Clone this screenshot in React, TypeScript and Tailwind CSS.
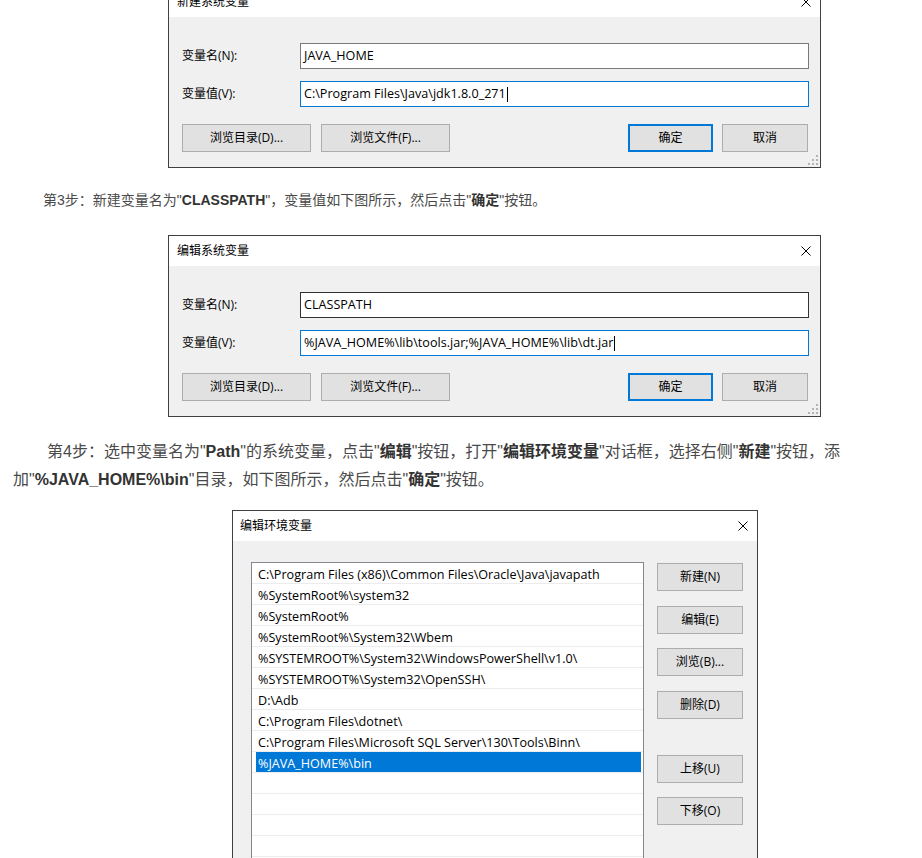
import React from 'react';

const ui = "font-['Open_Sans','Noto_Sans_CJK_SC',sans-serif]";
const article = "font-['Liberation_Sans','Noto_Sans_CJK_SC',sans-serif]";

function CloseIcon() {
  return (
    <svg width="10" height="10" viewBox="0 0 10 10" className="shrink-0">
      <path d="M0.5 0.5L9.5 9.5M9.5 0.5L0.5 9.5" stroke="#000" strokeWidth="1" fill="none" />
    </svg>
  );
}

function Grip() {
  return (
    <svg width="10" height="10" viewBox="0 0 10 10" className="absolute right-[2px] bottom-[2px]">
      {[
        [8, 0],
        [4, 4],
        [8, 4],
        [0, 8],
        [4, 8],
        [8, 8],
      ].map(([x, y]) => (
        <rect key={`${x}-${y}`} x={x} y={y} width="2" height="2" fill="#b4b4b4" />
      ))}
    </svg>
  );
}

function WinButton({ label, className = '', primary = false }: { label: string; className?: string; primary?: boolean }) {
  return (
    <div
      className={`h-[28px] flex items-center justify-center bg-[#e1e1e1] text-[12px] text-black ${
        primary ? 'border-2 border-[#0078d7]' : 'border border-[#adadad]'
      } ${className}`}
    >
      {label}
    </div>
  );
}

interface VarDialogProps {
  title: string;
  name: string;
  value: string;
  nameBorder: string;
}

function VarDialog({ title, name, value, nameBorder }: VarDialogProps) {
  return (
    <div className={`relative w-[653px] border border-[#404040] bg-[#f0f0f0] ${ui}`}>
      <div className="h-[30px] bg-white flex items-center justify-between pl-[8px] pr-[9px]">
        <span className="text-[12px] text-black">{title}</span>
        <CloseIcon />
      </div>
      <div className="pt-[26px] pb-[15px] pl-[13px] pr-[11px]">
        <div className="flex items-center">
          <span className="w-[118px] text-[12px] text-black">变量名(N):</span>
          <div className={`flex-1 h-[26px] bg-white border ${nameBorder} flex items-center px-[3px] text-[12.6px] text-black`}>
            {name}
          </div>
        </div>
        <div className="mt-[12px] flex items-center">
          <span className="w-[118px] text-[12px] text-black">变量值(V):</span>
          <div className="flex-1 h-[26px] bg-white border border-[#0078d7] flex items-center px-[3px] text-[12.6px] text-black">
            <span>{value}</span>
            <span className="ml-[1px] w-[1px] h-[15px] bg-black" />
          </div>
        </div>
        <div className="mt-[17px] flex items-center pr-[1px]">
          <WinButton label="浏览目录(D)..." className="w-[129px]" />
          <WinButton label="浏览文件(F)..." className="w-[129px] ml-[10px]" />
          <div className="ml-auto flex gap-[9px]">
            <WinButton label="确定" className="w-[85px]" primary />
            <WinButton label="取消" className="w-[86px]" />
          </div>
        </div>
      </div>
      <Grip />
    </div>
  );
}

const paths = [
  'C:\\Program Files (x86)\\Common Files\\Oracle\\Java\\javapath',
  '%SystemRoot%\\system32',
  '%SystemRoot%',
  '%SystemRoot%\\System32\\Wbem',
  '%SYSTEMROOT%\\System32\\WindowsPowerShell\\v1.0\\',
  '%SYSTEMROOT%\\System32\\OpenSSH\\',
  'D:\\Adb',
  'C:\\Program Files\\dotnet\\',
  'C:\\Program Files\\Microsoft SQL Server\\130\\Tools\\Binn\\',
  '%JAVA_HOME%\\bin',
  '',
  '',
  '',
  '',
  '',
];

function EnvDialog() {
  return (
    <div className={`w-[526px] border border-[#404040] bg-[#f0f0f0] ${ui}`}>
      <div className="h-[30px] bg-white flex items-center justify-between pl-[7px] pr-[9px]">
        <span className="text-[12px] text-black">编辑环境变量</span>
        <CloseIcon />
      </div>
      <div className="pt-[21px] pl-[18px] pb-[40px] flex">
        <div className="w-[393px] h-[340px] bg-white border border-[#828790] overflow-hidden">
          {paths.map((p, i) => (
            <div key={i} className="h-[21px] border-b border-[#ececec] flex items-stretch">
              {i === 9 ? (
                <div className="ml-[4px] mr-[2px] flex-1 bg-[#0078d7] text-white text-[12.6px] flex items-center pl-[2px] pt-[4px]">
                  {p}
                </div>
              ) : (
                <div className="pl-[6px] pt-[4px] text-[12.6px] text-black flex items-center whitespace-nowrap">{p}</div>
              )}
            </div>
          ))}
        </div>
        <div className="ml-[13px] flex flex-col">
          <WinButton label="新建(N)" className="w-[86px] mt-[1px]" />
          <WinButton label="编辑(E)" className="w-[86px] mt-[15px]" />
          <WinButton label="浏览(B)..." className="w-[86px] mt-[14px]" />
          <WinButton label="删除(D)" className="w-[86px] mt-[15px]" />
          <WinButton label="上移(U)" className="w-[86px] mt-[36px]" />
          <WinButton label="下移(O)" className="w-[86px] mt-[14px]" />
        </div>
      </div>
    </div>
  );
}

export default function App() {
  return (
    <div className="w-[922px] h-[858px] overflow-hidden bg-white">
      <div className="-mt-[14px] ml-[168px]">
        <VarDialog
          title="新建系统变量"
          name="JAVA_HOME"
          value="C:\Program Files\Java\jdk1.8.0_271"
          nameBorder="border-[#7a7a7a]"
        />
      </div>

      <p className={`mt-[18px] pl-[13px] indent-[30px] text-[14px] leading-[28px] text-[#4a4a4a] whitespace-nowrap ${article}`}>
        第3步：新建变量名为"<b className="text-[#333]">CLASSPATH</b>"，变量值如下图所示，然后点击"<b className="text-[#333]">确定</b>"按钮。
      </p>

      <div className="mt-[21px] ml-[168px]">
        <VarDialog
          title="编辑系统变量"
          name="CLASSPATH"
          value="%JAVA_HOME%\lib\tools.jar;%JAVA_HOME%\lib\dt.jar"
          nameBorder="border-[#333]"
        />
      </div>

      <div className={`mt-[21px] pl-[13px] text-[16px] leading-[28px] text-[#4a4a4a] ${article}`}>
        <div className="pl-[34px] whitespace-nowrap">
          第4步：选中变量名为"<b className="text-[#333]">Path</b>"的系统变量，点击"<b className="text-[#333]">编辑</b>"按钮，打开"
          <b className="text-[#333]">编辑环境变量</b>"对话框，选择右侧"<b className="text-[#333]">新建</b>"按钮，添
        </div>
        <div className="whitespace-nowrap">
          加"<b className="text-[#333]">%JAVA_HOME%\bin</b>"目录，如下图所示，然后点击"<b className="text-[#333]">确定</b>"按钮。
        </div>
      </div>

      <div className="mt-[16px] ml-[232px]">
        <EnvDialog />
      </div>
    </div>
  );
}
